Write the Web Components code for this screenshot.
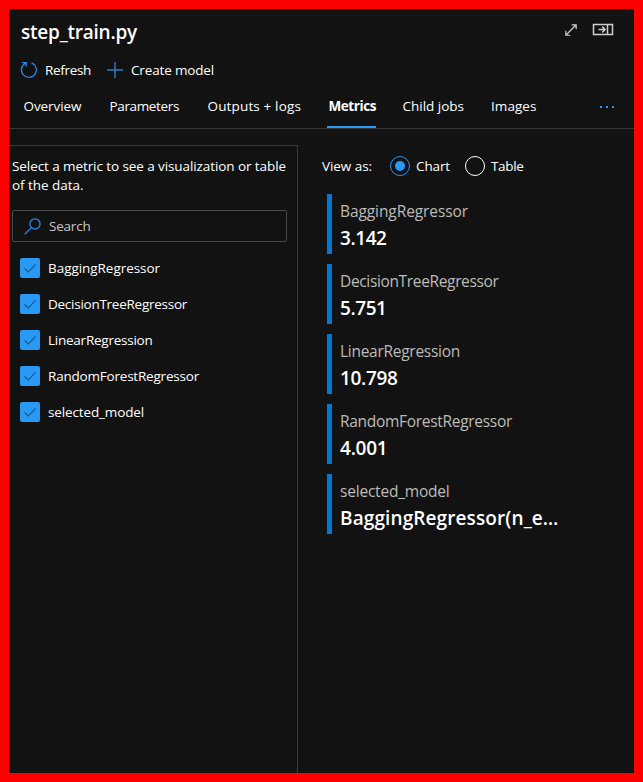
<!DOCTYPE html>
<html lang="en">
<head>
<meta charset="utf-8">
<title>step_train.py</title>
<style>
html, body { margin: 0; height: 100%; background: #121212; }
body { font-family: "Open Sans", "Noto Sans", sans-serif; font-size: 13.5px; line-height: 20px; color: #fff; overflow: hidden; }
</style>
</head>
<body>
<run-panel></run-panel>
<script>
class BaseElement extends HTMLElement {
  render(css, html) {
    if (!this.shadowRoot) this.attachShadow({ mode: 'open' });
    const t = document.createElement('template');
    t.innerHTML = `<style>:host{box-sizing:border-box}*{box-sizing:border-box}svg{display:block}${css}</style>${html}`;
    this.shadowRoot.replaceChildren(t.content.cloneNode(true));
  }
  attr(n) { return this.getAttribute(n) || ''; }
}

/* A single line of text, tracked so that it fills the width given in "w". */
customElements.define('fit-text', class extends BaseElement {
  connectedCallback() {
    this.render(':host{display:block;white-space:pre;flex:none}span{display:inline-block}', '<span><slot></slot></span>');
    const span = this.shadowRoot.querySelector('span');
    const w = parseFloat(this.attr('w'));
    const n = this.textContent.length;
    this.style.width = w + 'px';
    span.style.letterSpacing = ((w - span.getBoundingClientRect().width) / n) + 'px';
  }
});

customElements.define('tool-button', class extends BaseElement {
  connectedCallback() {
    const icons = {
      refresh: '<svg width="18" height="18" viewBox="0 0 18 18" fill="none" stroke="#2b88e8" stroke-width="1.3"><path d="M11.6 1.9A7.5 7.5 0 1 1 5.4 2.3M2.2 1.6H6.2V5.6"/></svg>',
      add: '<svg width="18" height="18" viewBox="0 0 18 18" fill="none" stroke="#2b7fc4" stroke-width="1.4"><path d="M9 1V17M1 9H17"/></svg>'
    };
    this.render(':host{display:flex;align-items:center;gap:7px;height:20px}', icons[this.attr('icon')] + '<slot></slot>');
  }
});

customElements.define('tab-item', class extends BaseElement {
  connectedCallback() {
    this.render(`:host{display:block;height:32px;padding:0 0 0 1.5px;border-bottom:2px solid transparent;flex:none}
      :host([selected]){font-weight:700;border-color:#2899f5}`, '<slot></slot>');
  }
});

customElements.define('search-field', class extends BaseElement {
  connectedCallback() {
    this.render(`:host{display:flex;align-items:center;gap:8px;width:275px;height:32px;border:1px solid #4a4a4a;border-radius:2px;padding-left:11px;color:#c8c6c4}`,
      `<svg width="17" height="17" viewBox="0 0 17 17" fill="none" stroke="#2b88e8" stroke-width="1.25"><circle cx="11" cy="5.9" r="5.1"/><path d="M7.3 9.6L.7 16.2"/></svg>
       <fit-text w="41.5">Search</fit-text>`);
  }
});

customElements.define('check-row', class extends BaseElement {
  connectedCallback() {
    this.render(`:host{display:flex;align-items:center;gap:8px;height:20px}
      .box{width:20px;height:20px;border-radius:2px;background:#2899f5}`,
      `<div class="box"><svg width="20" height="20" viewBox="0 0 20 20" fill="none" stroke="#134f86" stroke-width="1.05"><path d="M4.5 10.3L8.3 14L15.4 6.3"/></svg></div><slot></slot>`);
  }
});

customElements.define('radio-option', class extends BaseElement {
  connectedCallback() {
    this.render(`:host{display:flex;align-items:center;gap:6px}
      .ring{display:flex;align-items:center;justify-content:center;width:20px;height:20px;border:1px solid #fff;border-radius:50%}
      :host([checked]) .ring{border-color:#2899f5}
      :host([checked]) .ring::after{content:"";width:10px;height:10px;border-radius:50%;background:#2899f5}`,
      '<div class="ring"></div><slot></slot>');
  }
});

customElements.define('metric-card', class extends BaseElement {
  connectedCallback() {
    this.render(`:host{display:block;height:60px;border-left:5px solid #0078d4;padding:5px 0 0 8px}
      .name{color:#bebbb8;font-size:15.5px;line-height:24px}
      .value{font-size:19px;font-weight:600;line-height:28px;margin-top:1px}`,
      `<fit-text class="name" w="${this.attr('nw')}">${this.attr('name')}</fit-text>
       <fit-text class="value" w="${this.attr('vw')}">${this.attr('value')}</fit-text>`);
  }
});

customElements.define('run-panel', class extends BaseElement {
  connectedCallback() {
    const metrics = [
      ['BaggingRegressor', 112, 128, '3.142', 46.5],
      ['DecisionTreeRegressor', 139, 158.5, '5.751', 46.5],
      ['LinearRegression', 104.5, 120, '10.798', 57.5],
      ['RandomForestRegressor', 151, 172, '4.001', 47.5],
      ['selected_model', 96, 109.5, 'BaggingRegressor(n_e…', 218.5]
    ];
    this.render(`
      :host{display:flex;flex-direction:column;width:643px;height:782px;border:9px solid #f00;background:#121212}
      header{display:flex;justify-content:space-between;padding:9px 20px 0 12px;height:51px}
      h1{margin:0;font-size:19px;font-weight:600;line-height:28px}
      .window{display:flex;gap:14px;padding-top:4px}
      .tools{display:flex;gap:15px;padding-left:11px;height:36px}
      nav{display:flex;height:33px;padding-left:13px;border-bottom:1px solid #383838;flex:none}
      tab-item+tab-item{margin-left:var(--gap)}
      .more{margin:9px 19px 0 auto}
      main{display:flex;flex:1;min-height:0;padding-top:16px}
      aside{width:289px;border:solid #3a3a3a;border-width:1px 1px 0 0;padding:11px 0 0 3px}
      .hint{line-height:19px;margin-bottom:15px}
      .checks{display:flex;flex-direction:column;gap:16px;padding:16px 0 0 8px}
      section{flex:1;padding:11px 0 0 24px}
      .view{display:flex;align-items:center}
      .view radio-option:first-of-type{margin-left:18px}
      .view radio-option+radio-option{margin-left:15px}
      .cards{display:flex;flex-direction:column;gap:10px;padding:18px 0 0 5px}
    `, `
      <header>
        <h1><fit-text w="116">step_train.py</fit-text></h1>
        <div class="window">
          <svg width="14" height="16" viewBox="0 0 14 16" fill="none" stroke="#d0cecc" stroke-width="1.15"><path d="M2 13L12 3M7.8 2.8H12.2V7.2M1.8 8.8V13.2H6.2"/></svg>
          <svg width="22" height="16" viewBox="0 0 22 16" fill="none" stroke="#d0cecc" stroke-width="1.5"><path d="M1.5 2.5H20.5V12.5H1.5ZM15.5 2.5V12.5M6.5 7.5H13M10.2 4.6L13.1 7.5L10.2 10.4"/></svg>
        </div>
      </header>
      <div class="tools">
        <tool-button icon="refresh"><fit-text w="46">Refresh</fit-text></tool-button>
        <tool-button icon="add"><fit-text w="83">Create model</fit-text></tool-button>
      </div>
      <nav>
        <tab-item><fit-text w="58">Overview</fit-text></tab-item>
        <tab-item style="--gap:26.5px"><fit-text w="69.5">Parameters</fit-text></tab-item>
        <tab-item style="--gap:27px"><fit-text w="93.5">Outputs + logs</fit-text></tab-item>
        <tab-item selected style="--gap:26px"><fit-text w="47.5">Metrics</fit-text></tab-item>
        <tab-item style="--gap:25px"><fit-text w="61.5">Child jobs</fit-text></tab-item>
        <tab-item style="--gap:25.5px"><fit-text w="45.5">Images</fit-text></tab-item>
        <svg class="more" width="16" height="4" viewBox="0 0 16 4" fill="#2899f5"><path d="M1 1h2v2H1zM7 1h2v2H7zM13 1h2v2h-2z"/></svg>
      </nav>
      <main>
        <aside>
          <div class="hint"><fit-text w="274">Select a metric to see a visualization or table</fit-text><fit-text w="71.5">of the data.</fit-text></div>
          <search-field></search-field>
          <div class="checks">${metrics.map(m => `<check-row><fit-text w="${m[1]}">${m[0]}</fit-text></check-row>`).join('')}</div>
        </aside>
        <section>
          <div class="view"><fit-text w="50">View as:</fit-text>
            <radio-option checked><fit-text w="34">Chart</fit-text></radio-option>
            <radio-option><fit-text w="32.5">Table</fit-text></radio-option></div>
          <div class="cards">${metrics.map(m => `<metric-card name="${m[0]}" nw="${m[2]}" value="${m[3]}" vw="${m[4]}"></metric-card>`).join('')}</div>
        </section>
      </main>`);
  }
});
</script>
</body>
</html>
